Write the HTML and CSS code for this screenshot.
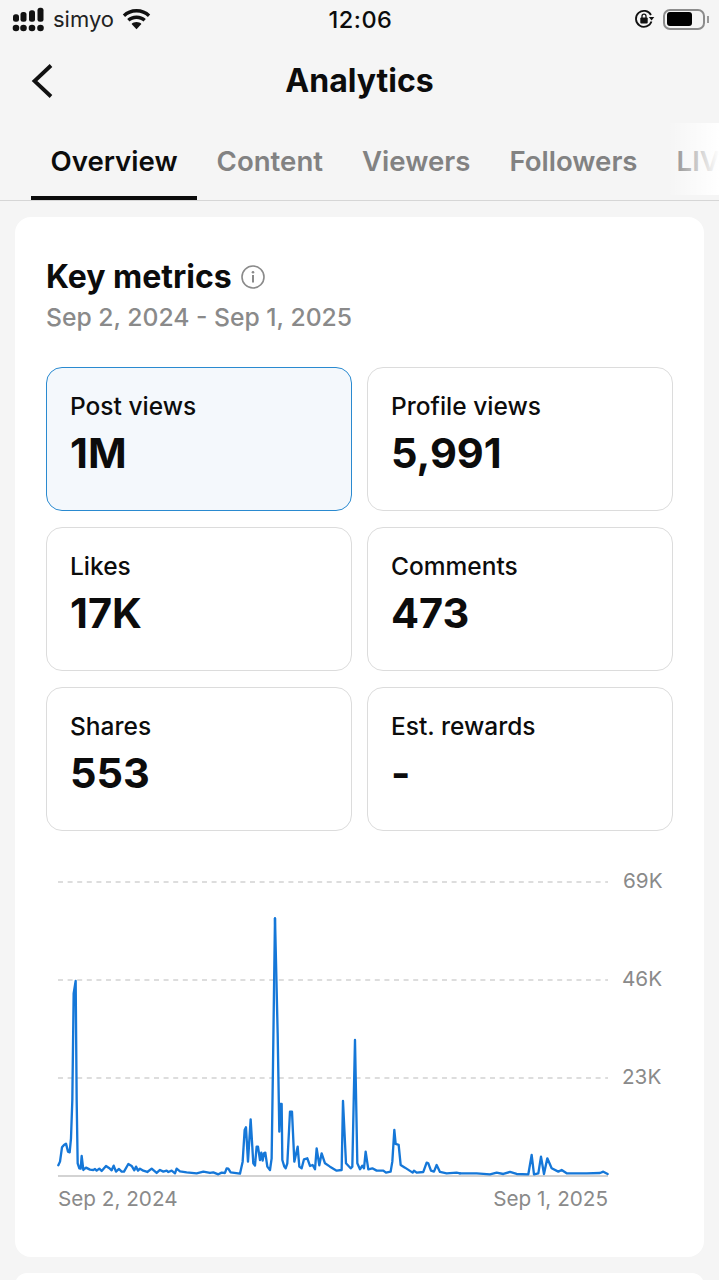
FILE: index.html
```html
<!DOCTYPE html>
<html lang="en">

<head>
  <meta charset="UTF-8">
  <meta name="viewport" content="width=device-width, initial-scale=1.0">
  <title>Analytics</title>
  <link rel="stylesheet" href="styles.css">
</head>

<body>
  <div class="status">
    <div class="status-left">
      <svg class="signal" width="33" height="25" viewBox="0 0 33 25" fill="#111">
        <circle cx="4" cy="21" r="3.300"/><circle cx="11.500" cy="21" r="3.300"/><circle cx="20" cy="21" r="3.300"/><circle cx="28.500" cy="21" r="3.300"/>
        <rect x="1" y="7.300" width="6" height="7.400" rx="2.500"/><rect x="8.500" y="5" width="6" height="9.700" rx="2.500"/><rect x="17" y="3.300" width="6" height="11.400" rx="2.500"/><rect x="25.500" y=".7" width="6" height="14" rx="2.500"/>
      </svg>
      <span class="carrier">simyo</span>
      <svg class="wifi" width="29" height="22" viewBox="0 0 29 22" fill="#111">
        <path d="M14.500 1C9 1 4.400 3 .8 6.400l2.300 2.500C6.100 6 10 4.400 14.500 4.400S22.900 6 25.900 8.900l2.300-2.500C24.600 3 20 1 14.500 1z"/>
        <path d="M14.500 7.500c-3.700 0-7 1.400-9.300 3.600l2.300 2.500c1.800-1.700 4.200-2.700 7-2.700s5.200 1 7 2.700l2.300-2.500c-2.300-2.200-5.600-3.600-9.300-3.600z"/>
        <path d="M14.500 14c-2 0-3.700.7-4.900 1.900l4.900 5.300 4.900-5.300C18.200 14.700 16.500 14 14.500 14z"/>
      </svg>
    </div>
    <div class="clock">12:06</div>
    <div class="status-right">
      <svg class="lock" width="21" height="20" viewBox="0 0 21 20">
        <path d="M17.500 12.500A8 8 0 1 1 17 6" fill="none" stroke="#111" stroke-width="1.800"/>
        <path d="M14.800 8h5.500l-2.700 3.500z" fill="#111"/>
        <rect x="6.300" y="8.500" width="7.400" height="6" rx="1" fill="#111"/>
        <path d="M8 9V7.200a2 2 0 0 1 4 0V9" fill="none" stroke="#111" stroke-width="1.300"/>
      </svg>
      <div class="battery"><div class="battery-fill"></div></div>
      <div class="battery-nub"></div>
    </div>
  </div>

  <div class="header">
    <svg class="back" width="24" height="34" viewBox="0 0 24 34">
      <path d="M21 1.500 4.500 17 21 32.500" fill="none" stroke="#111" stroke-width="3.800"/>
    </svg>
    <h1>Analytics</h1>
  </div>

  <div class="tabs">
    <div class="tab active">Overview</div>
    <div class="tab">Content</div>
    <div class="tab">Viewers</div>
    <div class="tab">Followers</div>
    <div class="tab">LIV</div>
    <div class="tabs-fade"></div>
  </div>

  <div class="card">
    <div class="title">
      <h2>Key metrics</h2>
      <svg width="26" height="26" viewBox="0 0 26 26">
        <circle cx="13" cy="13" r="11" fill="none" stroke="#8a8a8a" stroke-width="1.600"/>
        <circle cx="13" cy="8.300" r="1.300" fill="#8a8a8a"/>
        <rect x="12" y="11" width="2" height="7.500" fill="#8a8a8a"/>
      </svg>
    </div>
    <div class="dates">Sep 2, 2024 - Sep 1, 2025</div>

    <div class="metrics">
      <div class="metric selected">
        <div class="label">Post views</div>
        <div class="value">1M</div>
      </div>
      <div class="metric">
        <div class="label">Profile views</div>
        <div class="value">5,991</div>
      </div>
      <div class="metric">
        <div class="label">Likes</div>
        <div class="value">17K</div>
      </div>
      <div class="metric">
        <div class="label">Comments</div>
        <div class="value">473</div>
      </div>
      <div class="metric">
        <div class="label">Shares</div>
        <div class="value">553</div>
      </div>
      <div class="metric">
        <div class="label">Est. rewards</div>
        <div class="value">-</div>
      </div>
    </div>

    <svg class="chart" width="627" height="360" viewBox="46 860 627 360">
      <line class="grid" x1="58" y1="882" x2="608" y2="882"/>
      <line class="grid" x1="58" y1="980" x2="608" y2="980"/>
      <line class="grid" x1="58" y1="1078" x2="608" y2="1078"/>
      <line class="base" x1="58" y1="1176" x2="608" y2="1176"/>
      <text class="axis" x="623" y="888">69K</text>
      <text class="axis" x="622" y="986">46K</text>
      <text class="axis" x="622" y="1084">23K</text>
      <text class="axis" x="58" y="1206">Sep 2, 2024</text>
      <text class="axis" x="608" y="1206" text-anchor="end">Sep 1, 2025</text>
      <!-- points read off the trend line, three stretches -->
      <g transform="translate(40 900) scale(.3333)">
        <polyline class="trend" points="55,796 60,785 66,742 72,735 78,731 84,755 89,757 93,715 97,600 101,280 107,243 110,600 113,790 118,805 122,806 125,768 130,810 138,803 150,809 160,810 165,807 170,812 178,806 185,813 198,798 207,804 215,811 221,797 228,815 237,807 245,815 252,815 265,792 275,798 283,811 288,800 294,812 300,806 310,812 322,816 335,806 350,819 360,810 370,815 380,812 385,816 395,812 405,820 410,806 420,814 440,817 470,820 490,815 510,819 520,817 535,823 545,818 555,819 560,805 565,806 572,817 600,821 608,785 614,690 618,682 624,785 632,658 640,790 645,797 650,740 654,740 660,780 664,758 668,782 672,760 676,758 682,800 690,810 695,775 699,500 705,55"/>
      </g>
      <g transform="translate(230 900) scale(.3333)">
        <polyline class="trend" points="135,55 143,400 148,695 151,612 155,612 157,780 163,800 167,805 172,790 180,635 186,635 193,785 203,740 208,800 215,805 222,778 232,775 240,798 248,795 255,808 260,745 268,796 275,760 285,790 300,800 320,812 335,810 339,603 348,790 362,805 367,800 375,420 382,790 390,808 397,797 402,805 407,755 415,808 427,805 440,812 460,812 468,818 482,815 487,785 493,690 497,732 506,735 512,795 525,803 548,818 552,812 560,818 580,816 590,788 595,790 603,812 612,815 620,795 630,816 650,820 680,818 690,820"/>
      </g>
      <g transform="translate(460 1060) scale(.3333)">
        <polyline class="trend" points="0,340 50,340 90,343 110,338 130,342 150,336 170,342 205,343 215,285 222,343 235,340 243,290 252,342 262,295 275,325 295,335 305,330 320,340 380,340 420,339 430,335 443,342"/>
      </g>
    </svg>
  </div>

  <div class="card next"></div>
</body>

</html>
```

FILE: styles.css
```css
html, body {
  height: 100%;
}

body {
  margin: 0;
  height: 1280px;
  overflow: hidden;
  background-color: #f5f5f5;
  color: #0c0c0c;
  font-family: Inter, "Liberation Sans", sans-serif;
}

/* status bar */
.status {
  height: 38px;
  padding: 0 10px 0 12px;
  display: grid;
  grid-template-columns: 1fr auto 1fr;
  align-items: center;
}

.status-left {
  display: flex;
  align-items: center;
}

.carrier {
  margin-left: 8px;
  font-size: 22px;
  color: #222;
}

.wifi {
  margin-left: 8px;
}

.clock {
  font-size: 23.500px;
  font-weight: 500;
  letter-spacing: 0.500px;
}

.status-right {
  display: flex;
  align-items: center;
  justify-content: flex-end;
}

.battery {
  margin-left: 8px;
  width: 42px;
  height: 21px;
  box-sizing: border-box;
  padding: 1.500px 2px;
  border: 2px solid #8c8c8c;
  border-radius: 7px;
}

.battery-fill {
  width: 25px;
  height: 100%;
  background-color: #000;
  border-radius: 3px;
}

.battery-nub {
  width: 2px;
  height: 7px;
  margin-left: 2px;
  background-color: #999;
}

/* header */
.header {
  position: relative;
  height: 82px;
  box-sizing: border-box;
  padding-top: 3px;
  display: flex;
  align-items: center;
  justify-content: center;
}

.back {
  position: absolute;
  left: 30px;
  top: 26px;
}

h1 {
  margin: 0;
  font-size: 32px;
  font-weight: 700;
}

/* tabs */
.tabs {
  position: relative;
  height: 81px;
  padding-left: 31px;
  display: flex;
  box-sizing: border-box;
  border-bottom: 1px solid #d6d6d6;
  overflow: hidden;
  white-space: nowrap;
}

.tab {
  padding: 0 19.500px;
  height: 76px;
  line-height: 83px;
  box-sizing: border-box;
  font-size: 27.600px;
  font-weight: 600;
  color: #828282;
}

.tab.active {
  height: 80px;
  color: #0c0c0c;
  border-bottom: 4px solid #0c0c0c;
}

.tabs-fade {
  position: absolute;
  right: 0;
  top: 3px;
  bottom: 5px;
  width: 52px;
  background: linear-gradient(to right, rgba(255, 255, 255, 0), #fff);
}

/* cards */
.card {
  margin: 16px 15px 0;
  padding: 41px 31px 37px;
  background-color: #fff;
  border-radius: 16px;
}

.card.next {
  margin-top: 16px;
  height: 24px;
  padding: 0;
}

.title {
  display: flex;
  align-items: center;
  gap: 8px;
}

h2 {
  margin: 0;
  font-size: 32px;
  line-height: 38px;
  font-weight: 700;
}

.dates {
  margin-top: 5px;
  font-size: 24.700px;
  line-height: 32px;
  font-weight: 500;
  color: #8a8a8a;
}

.metrics {
  margin-top: 34px;
  display: grid;
  grid-template-columns: 1fr 1fr;
  gap: 16px 15px;
}

.metric {
  height: 144px;
  box-sizing: border-box;
  padding: 22px 23px;
  border: 1px solid #dcdcdc;
  border-radius: 16px;
}

.metric.selected {
  background-color: #f4f8fc;
  border-color: #2a8ad0;
}

.label {
  font-size: 24.500px;
  line-height: 32px;
  font-weight: 500;
}

.value {
  margin-top: 5px;
  font-size: 41.500px;
  line-height: 52px;
  font-weight: 700;
}

/* chart */
.chart {
  display: block;
  margin-top: 29px;
}

.grid {
  stroke: #d2d2d2;
  stroke-width: 1.500;
  stroke-dasharray: 5 4.600;
}

.base {
  stroke: #c4c4c4;
  stroke-width: 1.500;
}

.axis {
  font-size: 20.700px;
  fill: #8a8a8a;
}

.trend {
  fill: none;
  stroke: #1577d8;
  stroke-width: 7;
  stroke-linejoin: round;
  stroke-linecap: round;
}
```
